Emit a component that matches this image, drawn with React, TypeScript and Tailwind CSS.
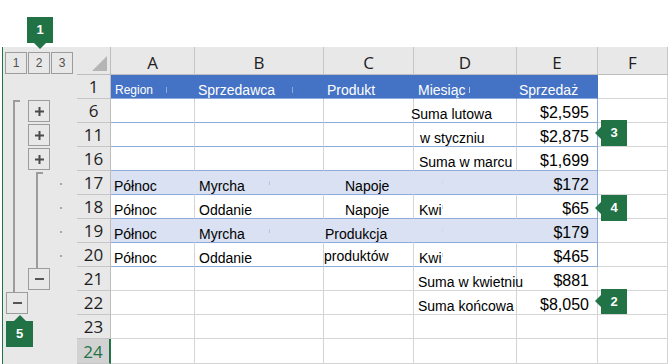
import React from "react";

type Kind = "head" | "band" | "white" | "out";

type Row = {
  n: string;
  kind: Kind;
  a?: string;
  b?: string;
  c?: string;
  cCls?: string;
  d?: string;
  dCls?: string;
  e?: string;
  tick?: boolean;
  sel?: boolean;
};

const rows: Row[] = [
  { n: "1", kind: "head" },
  { n: "6", kind: "white", d: "Suma lutowa", dCls: "ml-[-3px]", e: "$2,595" },
  { n: "11", kind: "white", d: "w styczniu", dCls: "ml-[6px]", e: "$2,875" },
  { n: "16", kind: "white", d: "Suma w marcu", dCls: "ml-[5px]", e: "$1,699" },
  { n: "17", kind: "band", a: "Północ", b: "Myrcha", c: "Napoje", cCls: "ml-[21px]", e: "$172" },
  { n: "18", kind: "white", a: "Północ", b: "Oddanie", c: "Napoje", cCls: "ml-[21px]", d: "Kwi", dCls: "ml-[5px]", e: "$65", tick: true },
  { n: "19", kind: "band", a: "Północ", b: "Myrcha", c: "Produkcja", cCls: "ml-[1px]", e: "$179" },
  { n: "20", kind: "white", a: "Północ", b: "Oddanie", c: "produktów", cCls: "mb-[2px]", d: "Kwi", dCls: "ml-[5px]", e: "$465", tick: true },
  { n: "21", kind: "out", d: "Suma w kwietniu", dCls: "ml-[4px]", e: "$881" },
  { n: "22", kind: "out", d: "Suma końcowa", dCls: "ml-[4px]", e: "$8,050" },
  { n: "23", kind: "out" },
  { n: "24", kind: "out", sel: true },
];

const GRID = "grid grid-cols-[34px_84px_129px_90px_103px_81px_70px]";
const FONT = "font-['Liberation_Sans',Arial,sans-serif]";
const NUMFONT = "font-['Open_Sans','Noto_Sans',sans-serif]";

// border/background per kind, for columns A-D and for E
const innerCls: Record<Kind, string> = {
  head: "bg-[#4472c4] border-r-[#4472c4] border-b-[#8eaadb]",
  band: "bg-[#d9e1f2] border-r-[#d9e1f2] border-b-[#8eaadb]",
  white: "border-r-[#d4d4d4] border-b-[#8eaadb]",
  out: "border-r-[#d4d4d4] border-b-[#d4d4d4]",
};
const edgeCls: Record<Kind, string> = {
  head: "bg-[#4472c4] border-r-[#4472c4] border-b-[#8eaadb]",
  band: "bg-[#d9e1f2] border-r-[#8eaadb] border-b-[#8eaadb]",
  white: "border-r-[#8eaadb] border-b-[#8eaadb]",
  out: "border-r-[#d4d4d4] border-b-[#d4d4d4]",
};

function Tick({ cls }: { cls: string }) {
  return <span className={`absolute w-px ${cls}`} />;
}

function SheetRow({ r, last }: { r: Row; last: boolean }) {
  const base = "relative flex items-end whitespace-nowrap border-r border-b text-[14px] leading-[16px]";
  const inner = innerCls[r.kind];
  const edge = edgeCls[r.kind];

  if (r.kind === "head") {
    return (
      <div className={`${GRID} h-[24px] text-white`}>
        <div className={`flex items-center justify-center pt-px border-r border-b border-r-[#bdbdbd] border-b-[#c6c6c6] bg-[#e8e8e8] text-[17px] leading-[20px] text-[#1e1e1e] ${NUMFONT}`}>
          {r.n}
        </div>
        <div className={`${base} ${inner}`}>
          <span className="ml-[4px] text-[12px]">Region</span>
          <Tick cls="left-[55px] top-[12px] h-[6px] bg-[#8eaadb]" />
        </div>
        <div className={`${base} ${inner}`}>
          <span className="ml-[3px]">Sprzedawca</span>
          <Tick cls="left-[97px] top-[12px] h-[6px] bg-[#8eaadb]" />
        </div>
        <div className={`${base} ${inner}`}>
          <span className="ml-[3px]">Produkt</span>
        </div>
        <div className={`${base} ${inner}`}>
          <span className="ml-[4px]">Miesiąc</span>
          <Tick cls="left-[55px] top-[12px] h-[6px] bg-[#b7c7e8]" />
        </div>
        <div className={`${base} ${edge}`}>
          <span className="ml-[2px]">Sprzedaż</span>
        </div>
        <div className={`${base} border-r-[#d4d4d4] border-b-[#d4d4d4]`} />
      </div>
    );
  }

  const head = r.sel
    ? "bg-[#d2d2d2] text-[#217346] border-r-2 border-r-[#217346]"
    : "bg-[#e8e8e8] text-[#1e1e1e] border-r border-r-[#bdbdbd]";

  return (
    <div className={`${GRID} ${last ? "h-[25px]" : "h-[24px]"} text-black`}>
      <div className={`flex items-center justify-center pt-px border-b border-b-[#c6c6c6] text-[17px] leading-[20px] ${NUMFONT} ${head}`}>
        {r.n}
      </div>
      <div className={`${base} ${inner}`}>
        {r.a && <span className="ml-[3px]">{r.a}</span>}
      </div>
      <div className={`${base} ${inner}`}>
        {r.b && <span className="ml-[4px]">{r.b}</span>}
        {r.kind === "band" && <Tick cls="left-[74px] top-[10px] h-[4px] bg-[#b4c6e7]" />}
      </div>
      <div className={`${base} ${inner}`}>
        {r.c && <span className={r.cCls}>{r.c}</span>}
      </div>
      <div className={`${base} ${inner}`}>
        {r.d && <span className={r.dCls}>{r.d}</span>}
        {(r.kind === "band" || r.tick) && <Tick cls="left-[28px] top-[10px] h-[4px] bg-[#c9dbe8]" />}
      </div>
      <div className={`${base} justify-end pr-[8px] text-[16px] leading-[18px] ${edge}`}>
        {r.e}
      </div>
      <div className={`${base} border-r-[#d4d4d4] border-b-[#d4d4d4]`} />
    </div>
  );
}

function PlusBtn({ cls }: { cls: string }) {
  return (
    <div className={`absolute w-[22px] h-[22px] border border-[#9c9c9c] flex items-center justify-center ${cls}`}>
      <svg width="9" height="9" viewBox="0 0 9 9">
        <rect x="3.5" y="0" width="2" height="9" fill="#4a4a4a" />
        <rect x="0" y="3.5" width="9" height="2" fill="#4a4a4a" />
      </svg>
    </div>
  );
}

function MinusBtn({ cls }: { cls: string }) {
  return (
    <div className={`absolute w-[22px] h-[22px] border border-[#9c9c9c] flex items-center justify-center ${cls}`}>
      <svg width="9" height="2" viewBox="0 0 9 2">
        <rect x="0" y="0" width="9" height="2" fill="#555" />
      </svg>
    </div>
  );
}

function OutlinePanel() {
  return (
    <div className="w-[77px] shrink-0 pl-[2px] bg-white">
      <div className={`relative h-full border-l border-[#217346] bg-[#e8e8e8] ${FONT}`}>
        <div className="flex gap-px pl-[2px] pt-[5px]">
          {["1", "2", "3"].map((l) => (
            <div key={l} className="w-[22px] h-[22px] border border-[#9c9c9c] flex items-center justify-center text-[12px] text-[#505050]">
              {l}
            </div>
          ))}
        </div>

        {/* outer group bracket */}
        <div className="absolute left-[10px] top-[53px] w-[2px] h-[192px] bg-[#9c9c9c]" />
        <div className="absolute left-[10px] top-[53px] w-[7px] h-[2px] bg-[#9c9c9c]" />
        {/* inner group bracket */}
        <div className="absolute left-[33px] top-[125px] w-[2px] h-[96px] bg-[#9c9c9c]" />
        <div className="absolute left-[33px] top-[125px] w-[7px] h-[2px] bg-[#9c9c9c]" />

        <PlusBtn cls="left-[25px] top-[53px]" />
        <PlusBtn cls="left-[25px] top-[77px]" />
        <PlusBtn cls="left-[25px] top-[101px]" />

        {["top-[136px]", "top-[160px]", "top-[184px]", "top-[208px]"].map((t) => (
          <div key={t} className={`absolute left-[57px] w-[2px] h-[2px] bg-[#a8a8a8] ${t}`} />
        ))}

        <MinusBtn cls="left-[25px] top-[221px]" />
        <MinusBtn cls="left-[3px] top-[245px]" />
      </div>
    </div>
  );
}

function ColumnHeader() {
  const letters = ["A", "B", "C", "D", "E", "F"];
  return (
    <div className={`${GRID} h-[28px] bg-[#e8e8e8] text-[17px] leading-[20px] text-[#1e1e1e] ${NUMFONT}`}>
      <div className="relative border-r border-b border-r-[#bdbdbd] border-b-[#bdbdbd]">
        <svg className="absolute right-[3px] bottom-[3px]" width="15" height="15" viewBox="0 0 15 15">
          <polygon points="15,0 15,15 0,15" fill="#b5b5b5" />
        </svg>
      </div>
      {letters.map((l) => (
        <div key={l} className="flex items-end justify-center pb-px border-r border-b border-r-[#c6c6c6] border-b-[#bdbdbd]">
          {l}
        </div>
      ))}
    </div>
  );
}

export default function App() {
  return (
    <div className={`relative w-[668px] h-[364px] overflow-hidden bg-white ${FONT}`}>
      <div className="h-[47px]" />
      <div className="flex h-[317px]">
        <OutlinePanel />
        <div className="flex-1 flex flex-col">
          <ColumnHeader />
          {rows.map((r, i) => (
            <SheetRow key={r.n} r={r} last={i === rows.length - 1} />
          ))}
        </div>
      </div>

      {/* callouts */}
      <div className="absolute left-[27px] top-[17px] w-[26px] h-[26px] bg-[#217346] text-white font-bold text-[13px] flex items-center justify-center">1</div>
      <svg className="absolute left-[34px] top-[43px]" width="12" height="6" viewBox="0 0 12 6">
        <polygon points="0,0 12,0 6,6" fill="#217346" />
      </svg>

      <div className="absolute left-[6px] top-[321px] w-[27px] h-[26px] bg-[#217346] text-white font-bold text-[13px] flex items-center justify-center">5</div>
      <svg className="absolute left-[14px] top-[315px]" width="12" height="6" viewBox="0 0 12 6">
        <polygon points="0,6 12,6 6,0" fill="#217346" />
      </svg>

      <div className="absolute left-[601px] top-[120px] w-[26px] h-[26px] bg-[#217346] text-white font-bold text-[13px] flex items-center justify-center">3</div>
      <svg className="absolute left-[595px] top-[127px]" width="6" height="12" viewBox="0 0 6 12">
        <polygon points="6,0 6,12 0,6" fill="#217346" />
      </svg>

      <div className="absolute left-[601px] top-[195px] w-[26px] h-[26px] bg-[#217346] text-white font-bold text-[13px] flex items-center justify-center">4</div>
      <svg className="absolute left-[595px] top-[202px]" width="6" height="12" viewBox="0 0 6 12">
        <polygon points="6,0 6,12 0,6" fill="#217346" />
      </svg>

      <div className="absolute left-[601px] top-[289px] w-[26px] h-[25px] bg-[#217346] text-white font-bold text-[13px] flex items-center justify-center">2</div>
      <svg className="absolute left-[595px] top-[295px]" width="6" height="12" viewBox="0 0 6 12">
        <polygon points="6,0 6,12 0,6" fill="#217346" />
      </svg>
    </div>
  );
}
